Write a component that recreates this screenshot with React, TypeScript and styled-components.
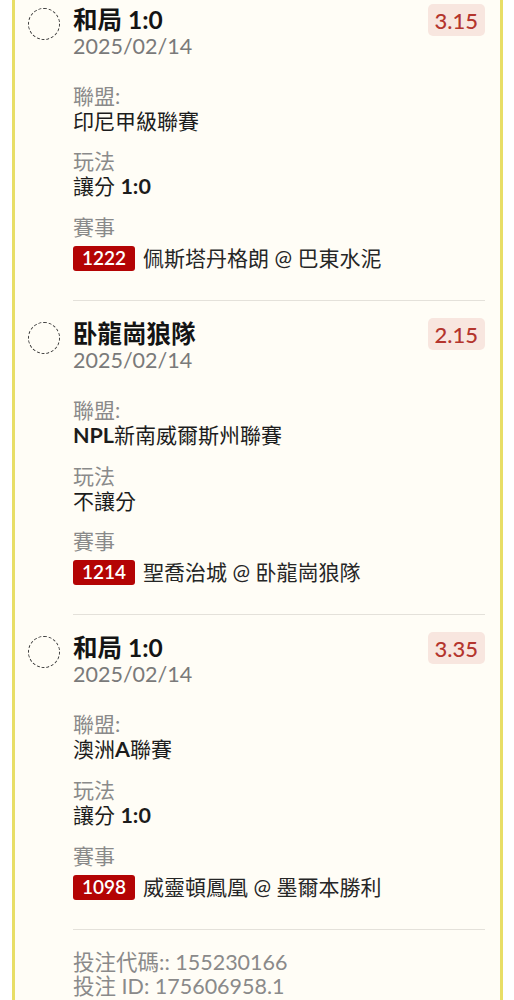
import React from 'react';
import styled, { createGlobalStyle } from 'styled-components';

const GlobalStyle = createGlobalStyle`
  html, body {
    margin: 0;
    padding: 0;
    background: #ffffff;
  }
  body {
    font-family: Lato, "Noto Sans CJK TC", sans-serif;
    color: #1c1c1c;
    overflow: hidden;
  }
`;

const Page = styled.div`
  padding: 0 11px 0 12px;
`;

const Card = styled.div`
  margin-top: -13px;
  background: #fffdf6;
  border-left: 3px solid #e8de66;
  border-right: 3px solid #e8de66;
  min-height: 1040px;
`;

const Selection = styled.div`
  display: flex;
`;

const Marker = styled.div`
  width: 58px;
  flex: 0 0 58px;
  padding-top: 21px;
  padding-left: 13px;
  box-sizing: border-box;
`;

const Circle = styled.div`
  width: 32px;
  height: 32px;
  border-radius: 50%;
  border: 1.5px dashed #3a3a3a;
  box-sizing: border-box;
`;

const Body = styled.div`
  flex: 1;
  margin-right: 15px;
  padding: 19px 0 29px;
  border-bottom: 1px solid #e4e1da;
`;

const Head = styled.div`
  display: flex;
  justify-content: space-between;
  align-items: flex-start;
`;

const Title = styled.div`
  font-size: 24.5px;
  line-height: 28px;
  font-weight: 700;
  color: #141414;
`;

const DateText = styled.div`
  font-size: 21.5px;
  line-height: 24px;
  color: #7a7a7a;
`;

const Odds = styled.div`
  margin-top: -2px;
  padding: 0 7px;
  height: 32px;
  display: flex;
  align-items: center;
  border-radius: 5px;
  background: #f8e6df;
  color: #b4352d;
  font-size: 22px;
  font-weight: 500;
`;

const Fields = styled.div`
  margin-top: 25px;
  display: flex;
  flex-direction: column;
  gap: 15px;
`;

const Field = styled.div`
  display: flex;
  flex-direction: column;
`;

const Label = styled.div`
  font-size: 21px;
  line-height: 25px;
  color: #8a8a8a;
`;

const Value = styled.div`
  font-size: 21px;
  line-height: 25px;
  color: #1c1c1c;
`;

const Latin = styled.span`
  font-weight: 700;
  font-size: 21.5px;
`;

const EventRow = styled.div`
  display: flex;
  align-items: center;
  gap: 8px;
  margin-top: 6px;
  font-size: 21px;
  line-height: 26px;
  color: #262626;
`;

const Code = styled.span`
  display: inline-flex;
  align-items: center;
  justify-content: center;
  height: 25px;
  padding: 0 9px;
  border-radius: 3px;
  background: #b40404;
  color: #fff;
  font-size: 19px;
  font-weight: 600;
`;

const Footer = styled.div`
  margin-left: 58px;
  padding-top: 20px;
  font-size: 21.5px;
  line-height: 24px;
  color: #8a8a8a;
`;

interface Bet {
  title: string;
  date: string;
  odds: string;
  league: string;
  play: string;
  code: string;
  match: string;
}

const bets: Bet[] = [
  { title: '和局 1:0', date: '2025/02/14', odds: '3.15', league: '印尼甲級聯賽', play: '讓分 1:0', code: '1222', match: '佩斯塔丹格朗 @ 巴東水泥' },
  { title: '卧龍崗狼隊', date: '2025/02/14', odds: '2.15', league: 'NPL新南威爾斯州聯賽', play: '不讓分', code: '1214', match: '聖喬治城 @ 卧龍崗狼隊' },
  { title: '和局 1:0', date: '2025/02/14', odds: '3.35', league: '澳洲A聯賽', play: '讓分 1:0', code: '1098', match: '威靈頓鳳凰 @ 墨爾本勝利' },
];

// latin runs in values render heavier than the CJK text around them
function MixedText({ text }: { text: string }) {
  const parts = text.split(/([A-Za-z0-9:.]+)/).filter(Boolean);
  return (
    <>
      {parts.map((p, i) => (/[A-Za-z0-9]/.test(p) ? <Latin key={i}>{p}</Latin> : <span key={i}>{p}</span>))}
    </>
  );
}

function BetItem({ bet }: { bet: Bet }) {
  return (
    <Selection>
      <Marker>
        <Circle />
      </Marker>
      <Body>
        <Head>
          <div>
            <Title>{bet.title}</Title>
            <DateText>{bet.date}</DateText>
          </div>
          <Odds>{bet.odds}</Odds>
        </Head>
        <Fields>
          <Field>
            <Label>聯盟:</Label>
            <Value><MixedText text={bet.league} /></Value>
          </Field>
          <Field>
            <Label>玩法</Label>
            <Value><MixedText text={bet.play} /></Value>
          </Field>
          <Field>
            <Label>賽事</Label>
            <EventRow>
              <Code>{bet.code}</Code>
              <span>{bet.match}</span>
            </EventRow>
          </Field>
        </Fields>
      </Body>
    </Selection>
  );
}

export default function App() {
  return (
    <Page>
      <GlobalStyle />
      <Card>
        {bets.map((bet, i) => (
          <BetItem key={i} bet={bet} />
        ))}
        <Footer>
          <div>投注代碼:: 155230166</div>
          <div>投注 ID: 175606958.1</div>
        </Footer>
      </Card>
    </Page>
  );
}
